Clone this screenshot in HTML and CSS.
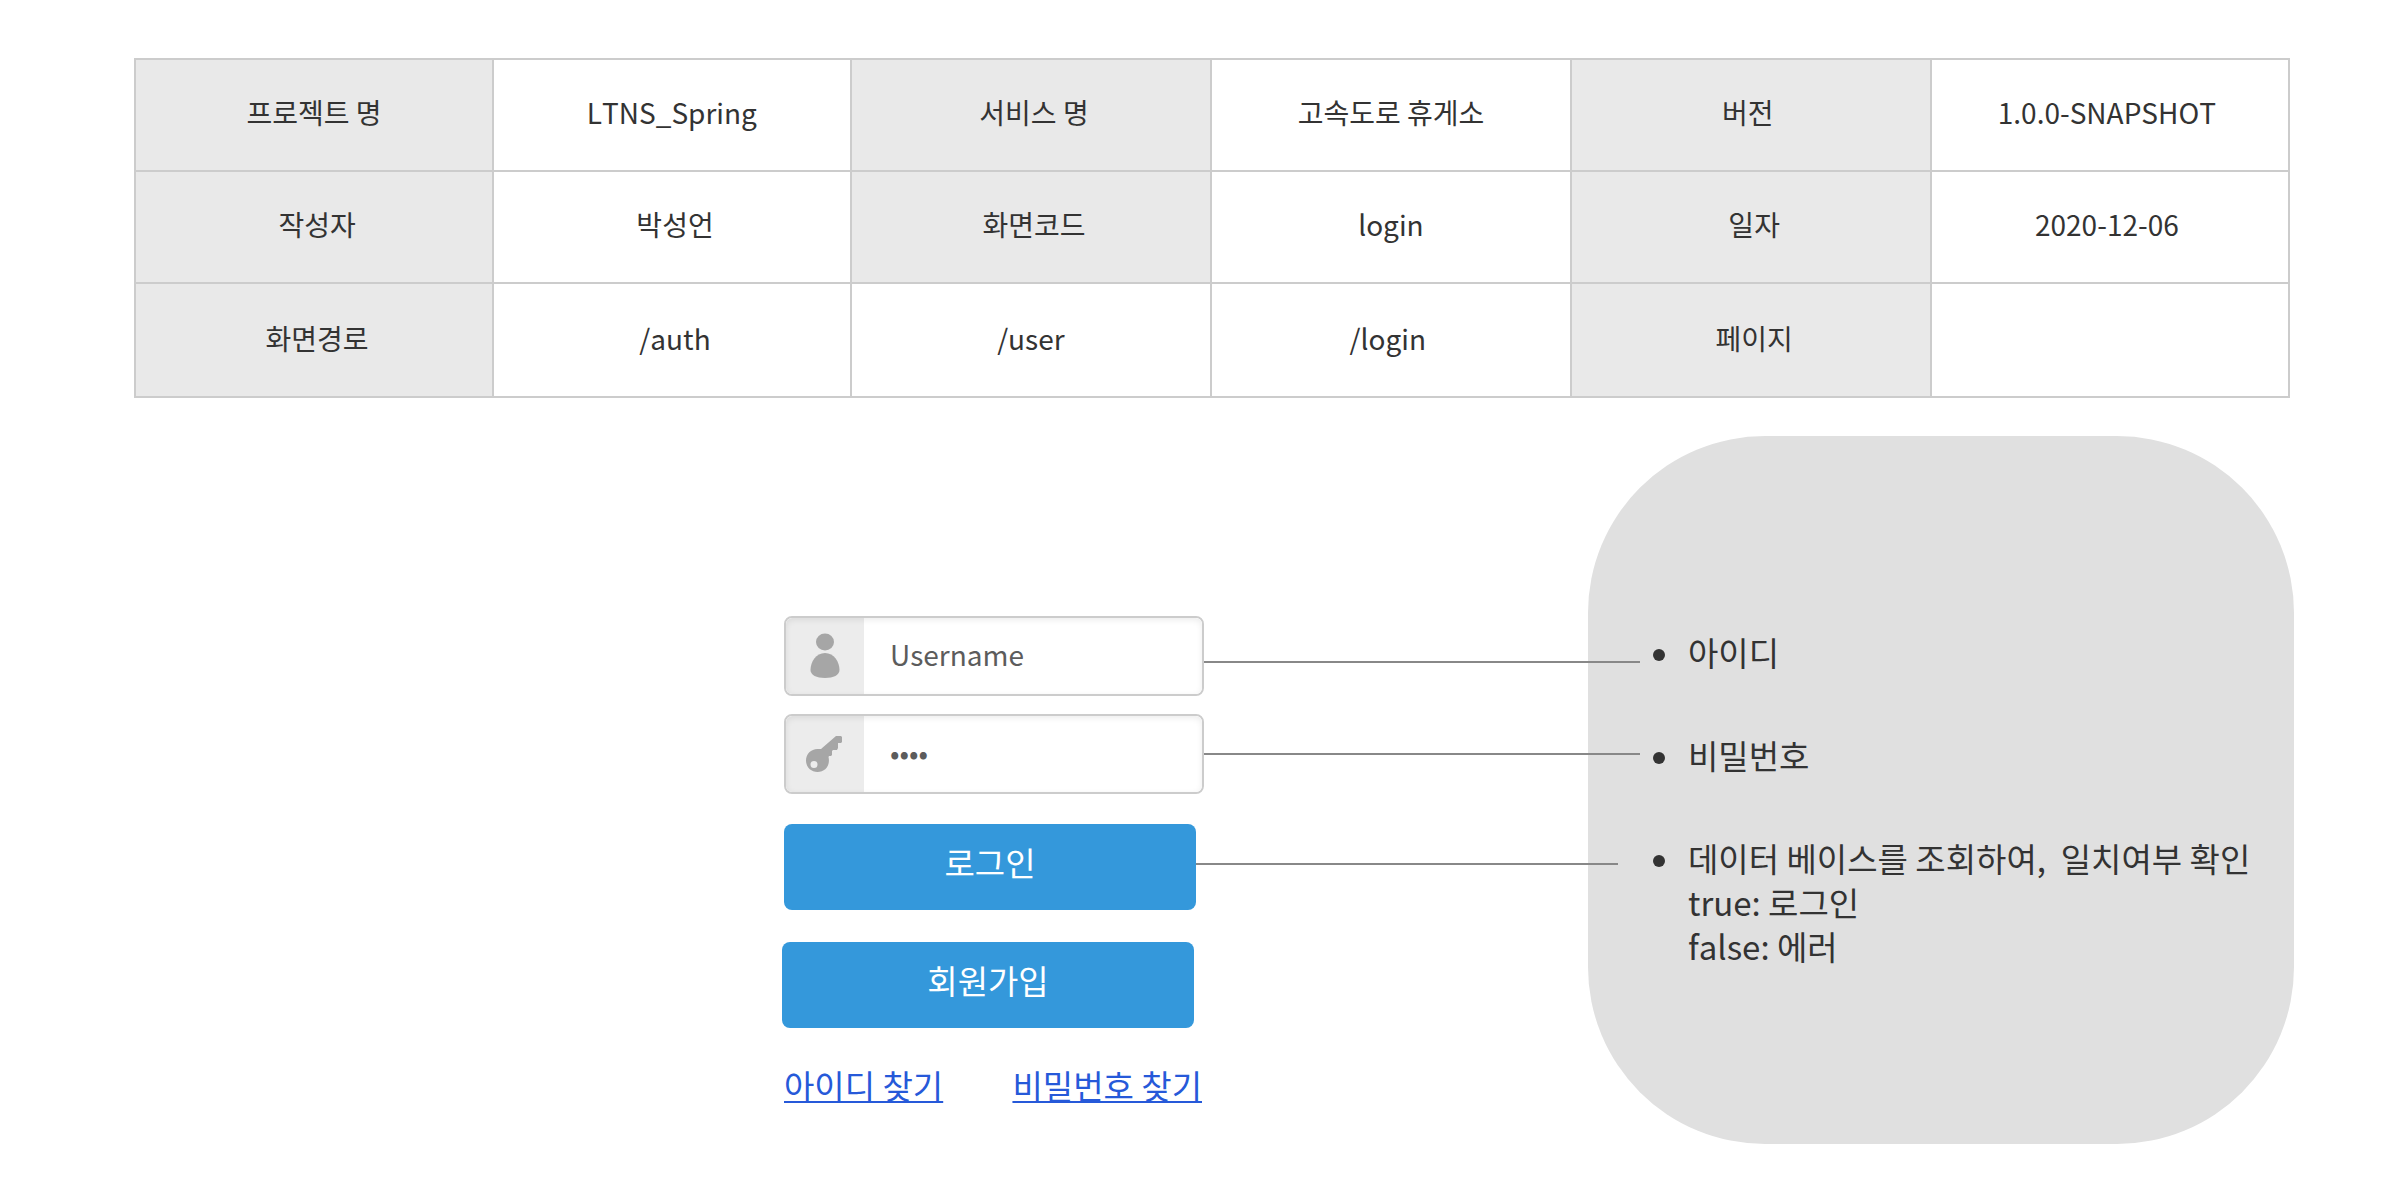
FILE: index.html
```html
<!DOCTYPE html>
<html lang="ko">
<head>
  <meta charset="utf-8">
  <meta name="viewport" content="width=device-width, initial-scale=1">
  <title>LTNS_Spring - login</title>
  <link rel="stylesheet" href="styles.css">
</head>
<body>
  <main class="page">
    <table class="spec">
      <tbody>
        <tr>
          <th scope="row">프로젝트 명</th><td>LTNS_Spring</td>
          <th scope="row">&nbsp;서비스 명</th><td>고속도로 휴게소</td>
          <th scope="row">버전&nbsp;</th><td>1.0.0-SNAPSHOT&nbsp;</td>
        </tr>
        <tr>
          <th scope="row">&nbsp;작성자</th><td>&nbsp;박성언</td>
          <th scope="row">&nbsp;화면코드</th><td>login</td>
          <th scope="row">&nbsp;일자</th><td>2020-12-06&nbsp;</td>
        </tr>
        <tr>
          <th scope="row">&nbsp;화면경로</th><td>&nbsp;/auth</td>
          <td>/user</td><td>/login&nbsp;</td>
          <th scope="row">&nbsp;페이지</th><td></td>
        </tr>
      </tbody>
    </table>

    <section class="wireframe">
      <form class="login">
        <div class="field">
          <label class="field-icon" for="username" aria-label="아이디">
            <svg width="30" height="46" viewBox="0 0 30 46" aria-hidden="true">
              <ellipse cx="15" cy="9" rx="9" ry="8.500"/>
              <path d="M15 20C24 20 29.500 29 29.500 37C29.500 42 23.500 45 15 45S.500 42 .500 37C.500 29 6 20 15 20Z"/>
            </svg>
          </label>
          <input id="username" class="field-input" type="text" value="Username">
        </div>
        <div class="field">
          <label class="field-icon" for="password" aria-label="비밀번호">
            <svg width="38" height="38" viewBox="1 0 38 38" aria-hidden="true">
              <path fill-rule="evenodd" d="M31 1H36L37 2V7L36 8H33V13L32 15H28L27 16V20L26 21H24L23.500 22C25.500 30 20.500 37 12.500 37C6 37 1 32 1 25.500C1 19 6 14 12.500 14H16ZM9 26A3.500 3.500 0 1 0 9 33A3.500 3.500 0 1 0 9 26Z"/>
            </svg>
          </label>
          <input id="password" class="field-input" type="password" value="pass">
        </div>
        <button class="btn btn-login" type="button">로그인</button>
        <button class="btn btn-join" type="button">회원가입</button>
        <div class="links">
          <a class="find-id" href="#">아이디 찾기</a>
          <a class="find-password" href="#">비밀번호 찾기</a>
        </div>
      </form>

      <div class="connectors" aria-hidden="true">
        <div class="line line-id"></div>
        <div class="line line-password"></div>
        <div class="line line-login"></div>
      </div>

      <aside class="notes">
        <ul class="note-list">
          <li>아이디</li>
          <li>비밀번호</li>
          <li>데이터 베이스를 조회하여,&nbsp; 일치여부 확인<br>true: 로그인<br>false: 에러</li>
        </ul>
      </aside>
    </section>
  </main>
</body>
</html>
```
FILE: styles.css
```css
* {
  box-sizing: border-box;
}

body {
  margin: 0;
  background: #fff;
  color: #333;
  font-family: "Noto Sans CJK JP", "Noto Sans CJK KR", sans-serif;
  font-size: 28px;
  font-kerning: none;
  font-feature-settings: "locl" 0;
}

.page {
  padding: 58px 106px 56px 134px;
}

/* Specification table */
.spec {
  width: calc(100% - 4px);
  table-layout: fixed;
  border-collapse: collapse;
}

.spec th,
.spec td {
  width: 16.6%;
  height: 112px;
  padding: 0 8px 6px;
  border: 2px solid #ccc;
  font-weight: 400;
  line-height: 40px;
  text-align: center;
}

.spec th:nth-child(3),
.spec td:nth-child(4),
.spec th:nth-child(5) {
  width: 16.7%;
}

.spec tr:last-child > * {
  height: 114px;
  padding-bottom: 4px;
}

.spec th {
  background: #e9e9e9;
}

/* Login form, connectors and notes */
.wireframe {
  display: grid;
  grid-template-columns: minmax(0, 650fr) 420px minmax(0, 384fr) 706px;
  margin-top: 38px;
}

.login {
  grid-column: 2;
  display: flex;
  flex-direction: column;
  padding-top: 180px;
}

.field {
  display: flex;
  height: 80px;
  margin-bottom: 18px;
  overflow: hidden;
  position: relative;
  border: 2px solid #ccc;
  border-radius: 8px;
}

.field::after {
  content: "";
  position: absolute;
  inset: 0;
  border-radius: 6px;
  box-shadow: inset 0 2px 6px rgba(0, 0, 0, 0.08);
  pointer-events: none;
}

.field-icon {
  display: flex;
  align-items: center;
  justify-content: center;
  width: 78px;
  background: #ececec;
  fill: #a6a6a6;
}

.field-input {
  flex: 1;
  min-width: 0;
  padding: 0 26px 4px;
  border: 0;
  outline: 0;
  background: #fff;
  color: #5c5c5c;
  font: inherit;
  font-kerning: none;
}

.btn {
  width: 412px;
  height: 86px;
  padding: 0 0 10px;
  border: 0;
  border-radius: 8px;
  background: #3498db;
  color: #fff;
  font: inherit;
  font-size: 33px;
}

.btn-login {
  margin-top: 12px;
}

.btn-join {
  margin: 32px 0 0 -2px;
}

.links {
  display: flex;
  justify-content: space-between;
  margin: 33px 2px 0 0;
}

.links a {
  color: #2659d9;
  font-size: 33px;
  line-height: 48px;
  text-decoration-thickness: 2px;
  text-decoration-skip-ink: none;
  text-underline-offset: 2px;
}

.connectors {
  grid-column: 3;
  margin-right: -52px;
  padding-top: 225px;
  z-index: 1;
}

.line {
  height: 2px;
  background: #888;
}

.line-password {
  margin-top: 90px;
}

.line-login {
  margin: 108px 22px 0 -8px;
}

.notes {
  grid-column: 4;
  min-height: 708px;
  padding: 194px 24px 0 64px;
  border-radius: 177px;
  background: #e0e0e0;
}

.note-list {
  display: flex;
  flex-direction: column;
  gap: 59px;
  margin: 0;
  padding: 0;
  list-style: none;
  font-size: 33px;
  line-height: 44px;
}

.note-list li {
  position: relative;
  padding-left: 36px;
}

.note-list li::before {
  content: "";
  position: absolute;
  top: 19px;
  left: 1px;
  width: 12px;
  height: 12px;
  border-radius: 50%;
  background: #333;
}
```
